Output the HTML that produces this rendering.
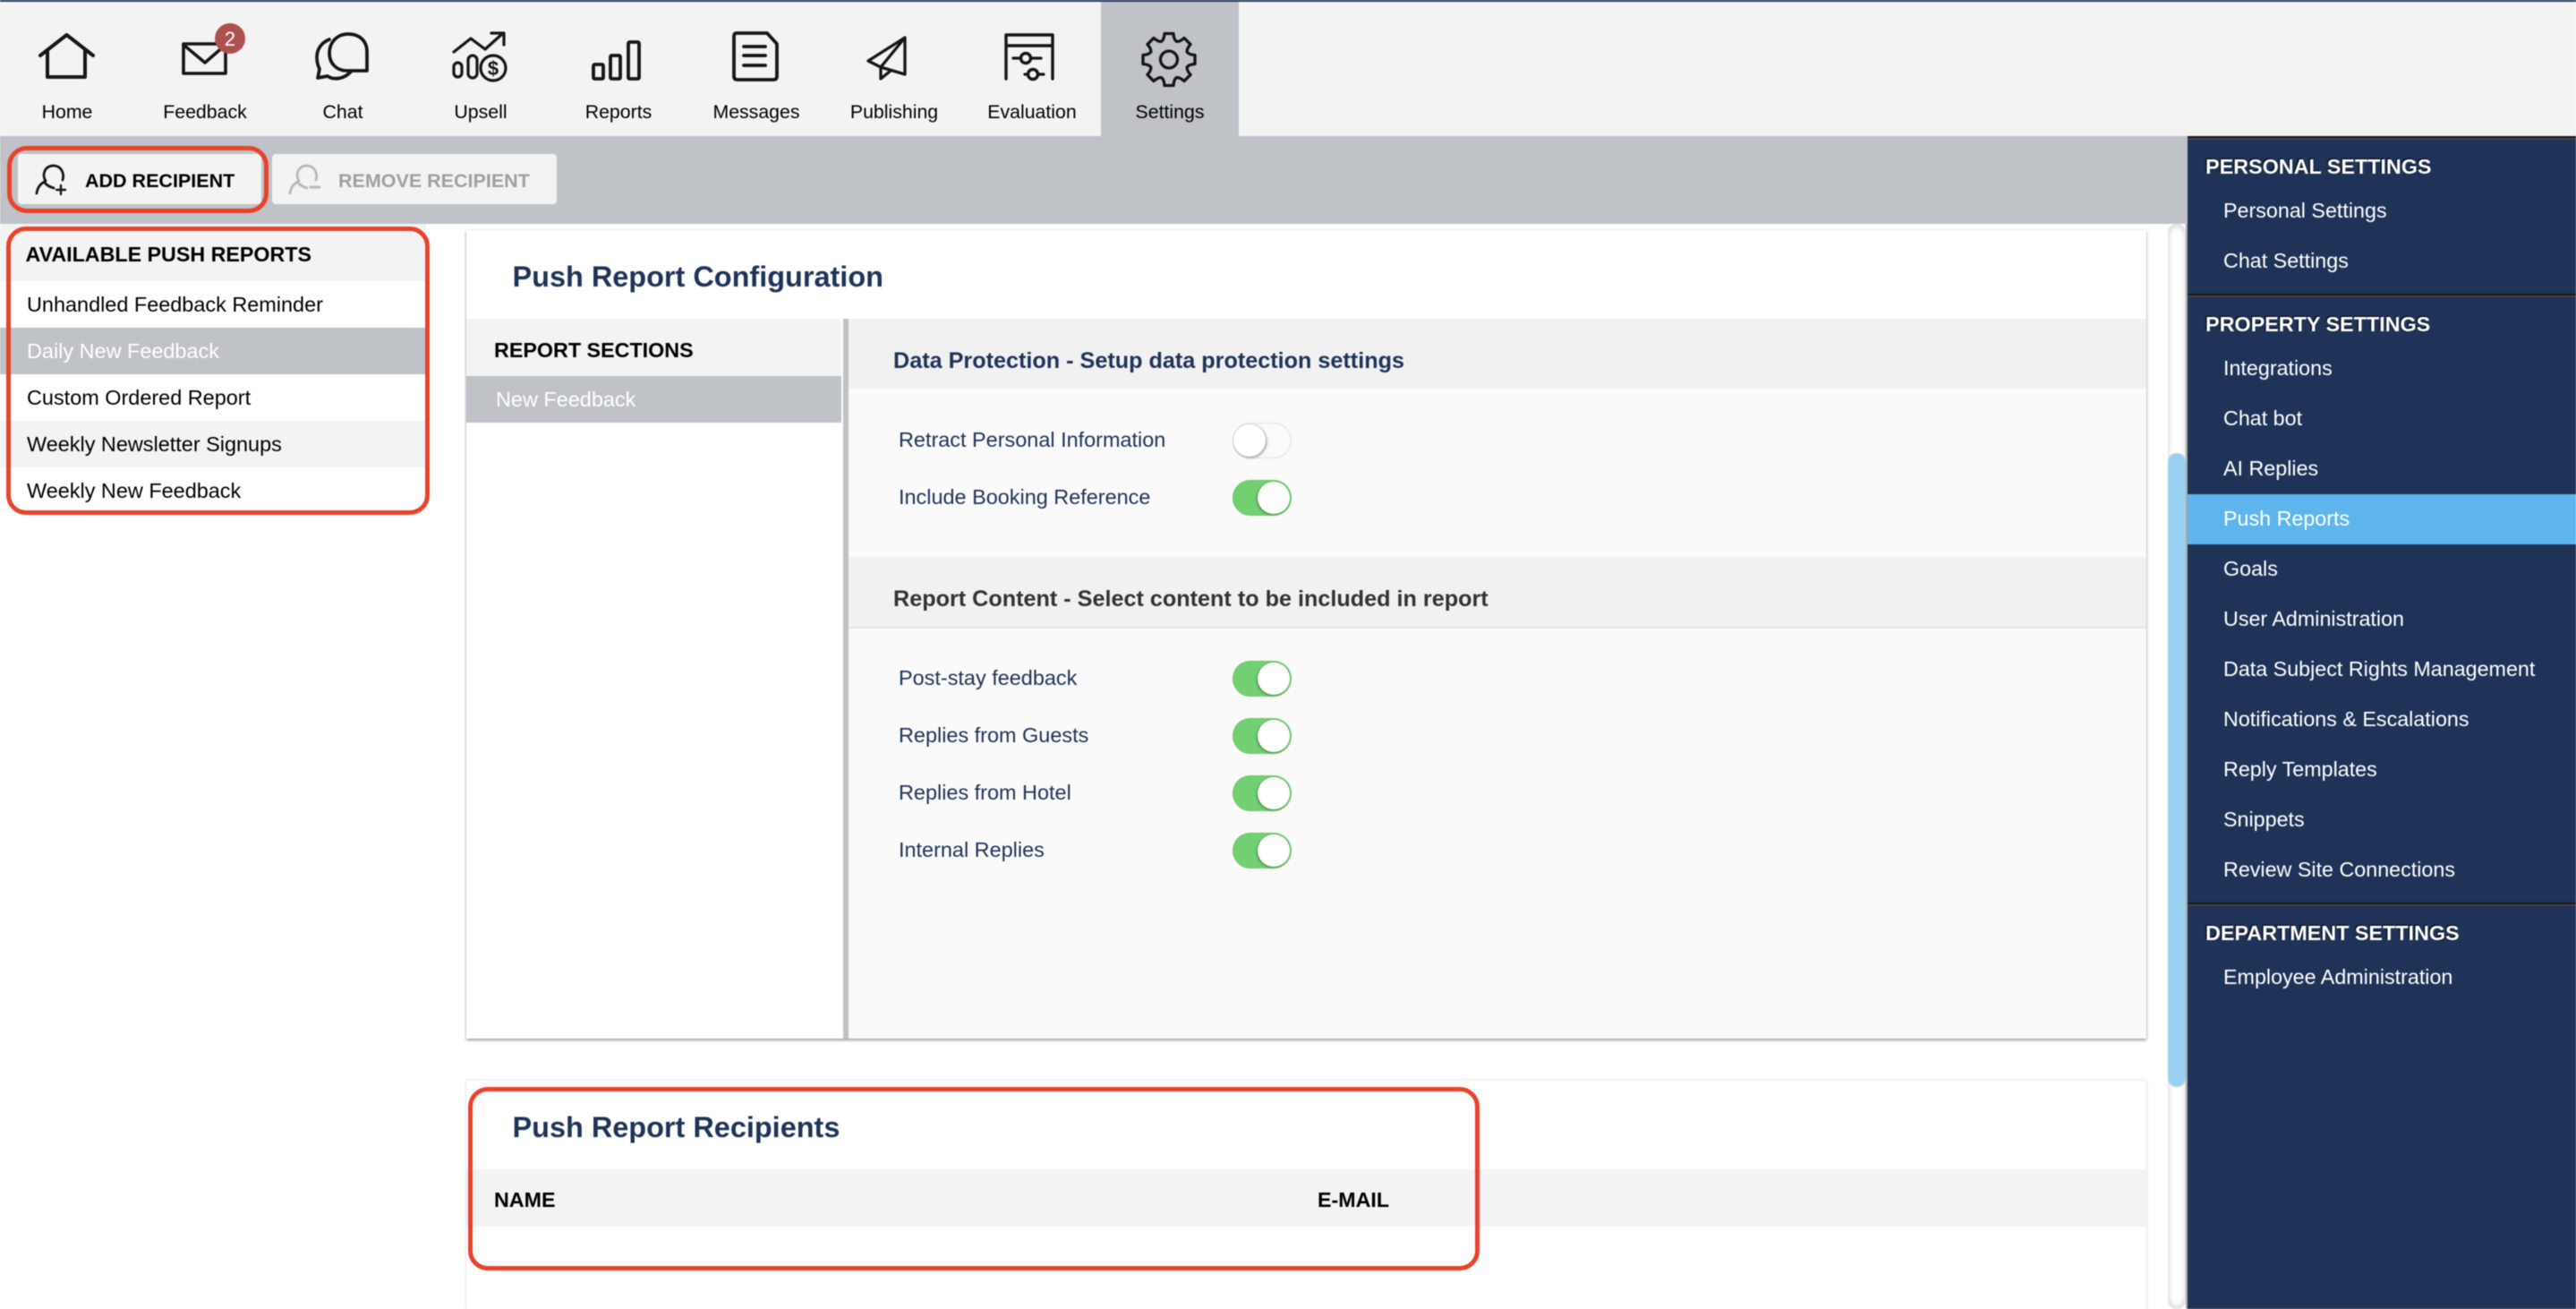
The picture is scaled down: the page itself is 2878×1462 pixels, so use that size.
<!DOCTYPE html>
<html lang="en">
<head>
<meta charset="utf-8">
<title>Push Reports</title>
<style>
html,body{margin:0;padding:0;background:#fff;width:2878px;height:1462px;overflow:hidden}
#w{position:relative;width:2878px;height:1462px;overflow:hidden;font-family:"Liberation Sans",Arial,sans-serif;filter:blur(.45px);background:#fff}
.a{position:absolute}
.t{position:absolute;white-space:nowrap;line-height:40px;height:40px;font-size:23.45px;color:#000}
.b{font-weight:bold}
.n{position:absolute;top:105px;width:154px;text-align:center;line-height:40px;font-size:21.3px;color:#000}
.navy{color:#1f3358}
.s{position:absolute;white-space:nowrap;line-height:40px;height:40px;font-size:23.3px;color:#fff;left:2484px}
.h{position:absolute;white-space:nowrap;line-height:40px;height:40px;font-size:23.35px;font-weight:bold;color:#fff;left:2464px;text-shadow:-1px -1px 1px #000}
.sep{position:absolute;left:2444px;width:434px;height:4px;background:linear-gradient(#161616 0 50%,#444 50% 100%)}
.tg{position:absolute;left:1377px;width:66px;height:40px;border-radius:20px;background:#72cf72;box-shadow:inset 0 0 1px #5aa85a}
.tg i{position:absolute;left:28px;top:2px;width:36px;height:36px;border-radius:50%;background:#fff;box-shadow:-1px 1px 2px rgba(0,60,0,.45)}
.tg.off{background:#fbfbfb;box-shadow:inset 0 0 2px #bbb}
.tg.off i{left:1px;top:2px;box-shadow:1px 1px 3px rgba(0,0,0,.45)}
.red{position:absolute;box-sizing:border-box;border:5px solid #e8432a}
svg{position:absolute;left:0;top:0}
</style>
</head>
<body>
<div id="w">
  <!-- top nav -->
  <div class="a" style="left:0;top:0;width:2878px;height:2px;background:#1f3358"></div>
  <div class="a" style="left:0;top:2px;width:2878px;height:150px;background:#f3f3f3"></div>
  <div class="a" style="left:1230px;top:2px;width:154px;height:150px;background:#bfc2c7"></div>
  <div class="n" style="left:-2px">Home</div>
  <div class="n" style="left:152px">Feedback</div>
  <div class="n" style="left:306px">Chat</div>
  <div class="n" style="left:460px">Upsell</div>
  <div class="n" style="left:614px">Reports</div>
  <div class="n" style="left:768px">Messages</div>
  <div class="n" style="left:922px">Publishing</div>
  <div class="n" style="left:1076px">Evaluation</div>
  <div class="n" style="left:1230px">Settings</div>

  <!-- toolbar -->
  <div class="a" style="left:0;top:152px;width:2444px;height:98px;background:#bfc2c7"></div>
  <div class="a" style="left:20px;top:172px;width:272px;height:56px;background:#f3f3f3;border-radius:4px"></div>
  <div class="a" style="left:304px;top:172px;width:318px;height:56px;background:#f3f3f3;border-radius:4px"></div>
  <div class="t b" style="left:95px;top:182px;font-size:21.5px">ADD RECIPIENT</div>
  <div class="t b" style="left:378px;top:182px;font-size:21.5px;color:#a0a0a0">REMOVE RECIPIENT</div>

  <!-- left list -->
  <div class="a" style="left:0;top:250px;width:476px;height:64px;background:#f3f3f3"></div>
  <div class="a" style="left:0;top:366px;width:476px;height:52px;background:#bfc2c7"></div>
  <div class="a" style="left:0;top:470px;width:476px;height:52px;background:#f3f3f3"></div>
  <div class="t b" style="left:28.5px;top:264px;font-size:23.25px">AVAILABLE PUSH REPORTS</div>
  <div class="t" style="left:30px;top:320px">Unhandled Feedback Reminder</div>
  <div class="t" style="left:30px;top:372px;color:#fff">Daily New Feedback</div>
  <div class="t" style="left:30px;top:424px">Custom Ordered Report</div>
  <div class="t" style="left:30px;top:476px">Weekly Newsletter Signups</div>
  <div class="t" style="left:30px;top:528px">Weekly New Feedback</div>

  <!-- card 1 -->
  <div class="a" style="left:521px;top:257px;width:1877px;height:903px;background:#fff;box-shadow:0 2px 3px rgba(0,0,0,.35),0 0 3px rgba(0,0,0,.12)"></div>
  <div class="t b navy" style="left:572.5px;top:289px;font-size:32.45px">Push Report Configuration</div>
  <div class="a" style="left:521px;top:356px;width:419px;height:64px;background:#f3f3f3"></div>
  <div class="a" style="left:521px;top:420px;width:419px;height:52px;background:#bfc2c7"></div>
  <div class="t b" style="left:552px;top:371px;font-size:23.3px">REPORT SECTIONS</div>
  <div class="t" style="left:554px;top:426px;color:#fff">New Feedback</div>
  <div class="a" style="left:942px;top:356px;width:6px;height:804px;background:#bfc2c7"></div>
  <div class="a" style="left:948px;top:356px;width:1450px;height:804px;background:#fafafa"></div>
  <div class="a" style="left:948px;top:356px;width:1450px;height:78px;background:#f1f1f1"></div>
  <div class="t b navy" style="left:998px;top:383px;font-size:25.2px">Data Protection - Setup data protection settings</div>
  <div class="t navy" style="left:1004px;top:471px">Retract Personal Information</div>
  <div class="t navy" style="left:1004px;top:535px">Include Booking Reference</div>
  <div class="tg off" style="top:472px"><i></i></div>
  <div class="tg" style="top:536px"><i></i></div>
  <div class="a" style="left:948px;top:622px;width:1450px;height:78px;background:#f1f1f1;border-bottom:2px solid #e4e4e4"></div>
  <div class="t b" style="left:998px;top:649px;font-size:25.2px;color:#333">Report Content - Select content to be included in report</div>
  <div class="t navy" style="left:1004px;top:737px">Post-stay feedback</div>
  <div class="t navy" style="left:1004px;top:801px">Replies from Guests</div>
  <div class="t navy" style="left:1004px;top:865px">Replies from Hotel</div>
  <div class="t navy" style="left:1004px;top:929px">Internal Replies</div>
  <div class="tg" style="top:738px"><i></i></div>
  <div class="tg" style="top:802px"><i></i></div>
  <div class="tg" style="top:866px"><i></i></div>
  <div class="tg" style="top:930px"><i></i></div>

  <!-- card 2 -->
  <div class="a" style="left:521px;top:1207px;width:1877px;height:300px;background:#fff;box-shadow:0 0 3px rgba(0,0,0,.2)"></div>
  <div class="t b navy" style="left:572.5px;top:1239px;font-size:32.45px">Push Report Recipients</div>
  <div class="a" style="left:521px;top:1306px;width:1877px;height:64px;background:#f3f3f3"></div>
  <div class="t b" style="left:552px;top:1320px;font-size:23.25px">NAME</div>
  <div class="t b" style="left:1472px;top:1320px;font-size:23.25px">E-MAIL</div>

  <!-- scrollbar -->
  <div class="a" style="left:2422px;top:250px;width:20px;height:1212px;border-radius:10px;background:#fdfdfd;box-shadow:inset 3px 0 4px rgba(0,0,0,.06),inset -3px 0 4px rgba(0,0,0,.06),inset 0 5px 5px rgba(0,0,0,.06),inset 0 -5px 5px rgba(0,0,0,.06)"></div>
  <div class="a" style="left:2422px;top:506px;width:20px;height:708px;border-radius:10px;background:#9ad0f0"></div>

  <!-- right panel -->
  <div class="a" style="left:2442px;top:250px;width:2px;height:1212px;background:#aaa"></div>
  <div class="a" style="left:2444px;top:152px;width:434px;height:1310px;background:#1f3358"></div>
  <div class="sep" style="top:152px"></div>
  <div class="h" style="top:166px">PERSONAL SETTINGS</div>
  <div class="s" style="top:215px">Personal Settings</div>
  <div class="s" style="top:271px">Chat Settings</div>
  <div class="sep" style="top:328px"></div>
  <div class="h" style="top:342px">PROPERTY SETTINGS</div>
  <div class="s" style="top:391px">Integrations</div>
  <div class="s" style="top:447px">Chat bot</div>
  <div class="s" style="top:503px">AI Replies</div>
  <div class="a" style="left:2444px;top:552px;width:434px;height:56px;background:#5db5ec"></div>
  <div class="s" style="top:559px">Push Reports</div>
  <div class="s" style="top:615px">Goals</div>
  <div class="s" style="top:671px">User Administration</div>
  <div class="s" style="top:727px">Data Subject Rights Management</div>
  <div class="s" style="top:783px">Notifications &amp; Escalations</div>
  <div class="s" style="top:839px">Reply Templates</div>
  <div class="s" style="top:895px">Snippets</div>
  <div class="s" style="top:951px">Review Site Connections</div>
  <div class="sep" style="top:1008px"></div>
  <div class="h" style="top:1022px">DEPARTMENT SETTINGS</div>
  <div class="s" style="top:1071px">Employee Administration</div>

  <!-- icons -->
  <svg width="2878" height="260" viewBox="0 0 2878 260" fill="none" stroke="#161616" stroke-width="3.5" stroke-linecap="round" stroke-linejoin="round">
    <!-- home -->
    <path d="M45 62 L74.5 39 L104 62 M53 57 V86 H95 V57" stroke-width="4"/>
    <!-- envelope -->
    <rect x="205" y="49" width="47" height="33" stroke-width="3.6"/>
    <path d="M205 50 L229 70 L252 50"/>
    <circle cx="257" cy="43" r="17" fill="#ad5050" stroke="none"/>
    <text x="257" y="51" text-anchor="middle" font-size="22" font-family="Liberation Sans" fill="#fff" stroke="none">2</text>
    <!-- chat -->
    <path d="M410 78 V58 C410 45 401 38 389 38 C376 38 368 48 368 59 C368 71 376 79 388 79 H410" stroke-width="3.7"/>
    <path d="M368 44 C358 48 354 56 354 64 C354 69 355 73 357 77 L355 87 L366 85 C373 90 385 88 392 80" stroke-width="3.7"/>
    <!-- upsell -->
    <path d="M507 58 L526 43 L542 55 L562 37 M549 37 H563 V50" stroke-width="3.2"/>
    <rect x="507" y="70" width="9" height="16" rx="4.5" stroke-width="3.2"/>
    <rect x="523" y="62" width="10" height="25" rx="5" stroke-width="3.2"/>
    <circle cx="551" cy="76" r="14" stroke-width="3.2"/>
    <text x="551" y="84" text-anchor="middle" font-size="22" font-weight="bold" font-family="Liberation Sans" fill="#161616" stroke="none">$</text>
    <!-- reports -->
    <rect x="663" y="72" width="11" height="16" rx="1.5" stroke-width="3.8"/>
    <rect x="682" y="62" width="11" height="26" rx="1.5" stroke-width="3.8"/>
    <rect x="702" y="47" width="12" height="41" rx="1.5" stroke-width="3.8"/>
    <!-- messages -->
    <path d="M823 37 H857 L868 49 V85 Q868 89 864 89 H824 Q820 89 820 85 V41 Q820 37 823 37 Z" stroke-width="3.8"/>
    <path d="M831 52 H855 M831 62 H855 M831 73 H855" stroke-width="3.8"/>
    <!-- publishing -->
    <path d="M970 68 L1011 42 V83 L984 75 Z M1011 42 L984 75 V88 L995 79" stroke-width="3.3"/>
    <!-- evaluation -->
    <path d="M1124 88 V39 H1176 V88 M1124 51 H1176" stroke-width="3.4"/>
    <path d="M1132 65 H1163 M1145 83 H1166" stroke-width="3.2"/>
    <circle cx="1146" cy="65" r="5.5" fill="#f3f3f3" stroke-width="3.4"/>
    <circle cx="1154" cy="83" r="5.5" fill="#f3f3f3" stroke-width="3.4"/>
    <!-- gear -->
    <g transform="translate(1306 66.5)" stroke-width="3.3">
      <path d="M-8.4 -20.3 Q-5.5 -22 -5 -29 H5 Q5.5 -22 8.4 -20.3"/>
      <path transform="rotate(45)" d="M-8.4 -20.3 Q-5.5 -22 -5 -29 H5 Q5.5 -22 8.4 -20.3"/>
      <path transform="rotate(90)" d="M-8.4 -20.3 Q-5.5 -22 -5 -29 H5 Q5.5 -22 8.4 -20.3"/>
      <path transform="rotate(135)" d="M-8.4 -20.3 Q-5.5 -22 -5 -29 H5 Q5.5 -22 8.4 -20.3"/>
      <path transform="rotate(180)" d="M-8.4 -20.3 Q-5.5 -22 -5 -29 H5 Q5.5 -22 8.4 -20.3"/>
      <path transform="rotate(225)" d="M-8.4 -20.3 Q-5.5 -22 -5 -29 H5 Q5.5 -22 8.4 -20.3"/>
      <path transform="rotate(270)" d="M-8.4 -20.3 Q-5.5 -22 -5 -29 H5 Q5.5 -22 8.4 -20.3"/>
      <path transform="rotate(315)" d="M-8.4 -20.3 Q-5.5 -22 -5 -29 H5 Q5.5 -22 8.4 -20.3"/>
      <circle r="9.5"/>
    </g>
    <!-- add user -->
    <path d="M41 216 C42 208 46 205 51 202 C47 196 49 186 59 185 C69 185 72 194 70 201 M50 204 C53 208 57 209 60 210" stroke-width="2.8"/>
    <path d="M63 212 H73 M68 207 V217" stroke-width="2.4"/>
    <!-- remove user -->
    <g transform="translate(283 0)" stroke="#b9b9b9">
      <path d="M41 216 C42 208 46 205 51 202 C47 196 49 186 59 185 C69 185 72 194 70 201 M50 204 C53 208 57 209 60 210" stroke-width="2.8"/>
      <path d="M64 209 H74" stroke-width="3"/>
    </g>
  </svg>

  <!-- red annotations -->
  <div class="red" style="left:8px;top:163px;width:292px;height:75px;border-radius:22px"></div>
  <div class="red" style="left:7px;top:253px;width:473px;height:322px;border-radius:22px"></div>
  <div class="red" style="left:523px;top:1214px;width:1130px;height:205px;border-radius:22px"></div>
</div>
</body>
</html>
